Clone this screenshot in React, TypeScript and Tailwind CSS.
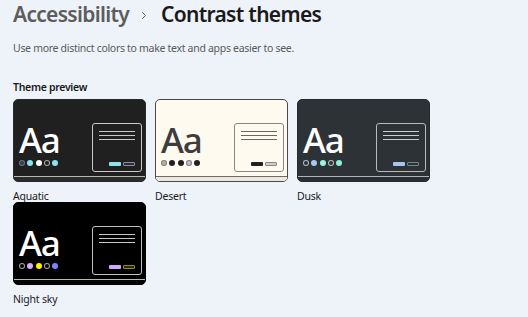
import React from "react";

type Dot = { fill: string; ring?: string };
type Theme = {
  name: string;
  bg: string;
  border: string;
  text: string;
  frame: string;
  line: string;
  band: string;
  bandLine: string;
  dots: Dot[];
  btn1: string;
  btn2Fill: string;
  btn2Border: string;
};

const themes: Theme[] = [
  {
    name: "Aquatic",
    bg: "#202020",
    border: "#2a2a2a",
    text: "#ffffff",
    frame: "#c8c8c8",
    line: "#c8c8c8",
    band: "#2c2c2c",
    bandLine: "#b8b8b8",
    dots: [
      { fill: "#34404e", ring: "#66717e" },
      { fill: "#8ee3f0" },
      { fill: "#ffffff" },
      { fill: "#202020", ring: "#a8a8a8" },
      { fill: "#8ee3f0" },
    ],
    btn1: "#8ee3f0",
    btn2Fill: "#2a2d34",
    btn2Border: "#8a90a0",
  },
  {
    name: "Desert",
    bg: "#fffaef",
    border: "#4a4a4a",
    text: "#3d3d3d",
    frame: "#8a8680",
    line: "#6a6660",
    band: "#ece8df",
    bandLine: "#6c6862",
    dots: [
      { fill: "#b8b2a6", ring: "#8a867e" },
      { fill: "#202020" },
      { fill: "#202020" },
      { fill: "#c6bcc4", ring: "#8a8288" },
      { fill: "#202020" },
    ],
    btn1: "#202020",
    btn2Fill: "#d0ccc6",
    btn2Border: "#8a8680",
  },
  {
    name: "Dusk",
    bg: "#2d3236",
    border: "#25292c",
    text: "#ffffff",
    frame: "#b8bcc0",
    line: "#c8ccd0",
    band: "#2a2e32",
    bandLine: "#b0b4b8",
    dots: [
      { fill: "#2d3236", ring: "#b8bcc0" },
      { fill: "#a6c8f0" },
      { fill: "#a0f0e4" },
      { fill: "#2d3236", ring: "#b8bcc0" },
      { fill: "#8ff0d8" },
    ],
    btn1: "#a6c8f0",
    btn2Fill: "#2d3236",
    btn2Border: "#6a8c82",
  },
  {
    name: "Night sky",
    bg: "#000000",
    border: "#000000",
    text: "#ffffff",
    frame: "#c0c0c0",
    line: "#c8c8c8",
    band: "#050505",
    bandLine: "#b8b8b8",
    dots: [
      { fill: "#000000", ring: "#a0a0a0" },
      { fill: "#d6a8ff" },
      { fill: "#fff200" },
      { fill: "#000000", ring: "#a0a0a0" },
      { fill: "#8080ff" },
    ],
    btn1: "#d6a8ff",
    btn2Fill: "#2a2a00",
    btn2Border: "#8c8a20",
  },
];

function Card({ t }: { t: Theme }) {
  return (
    <div className="flex flex-col w-[133px]">
      <div
        className="flex flex-col h-[83px] rounded-[5px] overflow-hidden border"
        style={{ background: t.bg, borderColor: t.border }}
      >
        <div className="flex flex-1 justify-between pl-[5px] pr-[3px] pt-[23px]">
          <div className="flex flex-col">
            <div
              className="text-[35px] leading-[30px] font-medium pt-[2px] tracking-[-1.3px]"
              style={{ color: t.text }}
            >
              Aa
            </div>
            <div className="flex gap-[2.25px] mt-[5px]">
              {t.dots.map((d, i) => (
                <div
                  key={i}
                  className="w-[6px] h-[6px] rounded-full"
                  style={{
                    background: d.fill,
                    boxShadow: d.ring ? `inset 0 0 0 1px ${d.ring}` : undefined,
                  }}
                />
              ))}
            </div>
          </div>
          <div
            className="w-[50px] h-[49px] rounded-[3px] border flex flex-col px-[6px] pt-[7px]"
            style={{ borderColor: t.frame }}
          >
            <div className="flex flex-col gap-[3px]">
              <div className="h-[1px]" style={{ background: t.line }} />
              <div className="h-[1px]" style={{ background: t.line }} />
              <div className="h-[1px]" style={{ background: t.line }} />
            </div>
            <div className="flex justify-end gap-[2px] mt-[22px]">
              <div className="w-[12px] h-[4px] rounded-[1px]" style={{ background: t.btn1 }} />
              <div
                className="w-[12px] h-[4px] rounded-[1px] border"
                style={{ background: t.btn2Fill, borderColor: t.btn2Border }}
              />
            </div>
          </div>
        </div>
        <div className="h-[1.5px]" style={{ background: t.bandLine }} />
        <div className="h-[4px]" style={{ background: t.band }} />
      </div>
      <div className="h-[20px] pt-[7px] text-[10.5px] leading-[14px] tracking-[-0.2px] text-[#1b1b1b]">
        {t.name}
      </div>
    </div>
  );
}

export default function App() {
  return (
    <div
      className="w-[528px] h-[317px] bg-[#eef2f9] pl-[13px] overflow-hidden"
      style={{ fontFamily: '"Segoe UI", "Noto Sans", "Open Sans", sans-serif' }}
    >
      <div className="flex items-center h-[28px] text-[21px] leading-[28px] font-semibold tracking-[-0.7px]">
        <span className="text-[#5c5c5c]">Accessibility</span>
        <svg className="ml-[12px] mr-[14px] mt-[2px]" width="6" height="9" viewBox="0 0 6 9">
          <path d="M1.2 1.2 L4.5 4.5 L1.2 7.8" fill="none" stroke="#5c5c5c" strokeWidth="1" />
        </svg>
        <span className="text-[#1a1a1a]">Contrast themes</span>
      </div>
      <div className="mt-[13px] text-[10.5px] leading-[14px] tracking-[-0.3px] text-[#5a5a5a]">
        Use more distinct colors to make text and apps easier to see.
      </div>
      <div className="mt-[25px] text-[10.5px] leading-[14px] font-semibold tracking-[-0.3px] text-[#1a1a1a]">
        Theme preview
      </div>
      <div className="mt-[5px] grid grid-cols-[133px_133px_133px] gap-x-[9px]">
        {themes.map((t) => (
          <Card key={t.name} t={t} />
        ))}
      </div>
    </div>
  );
}
